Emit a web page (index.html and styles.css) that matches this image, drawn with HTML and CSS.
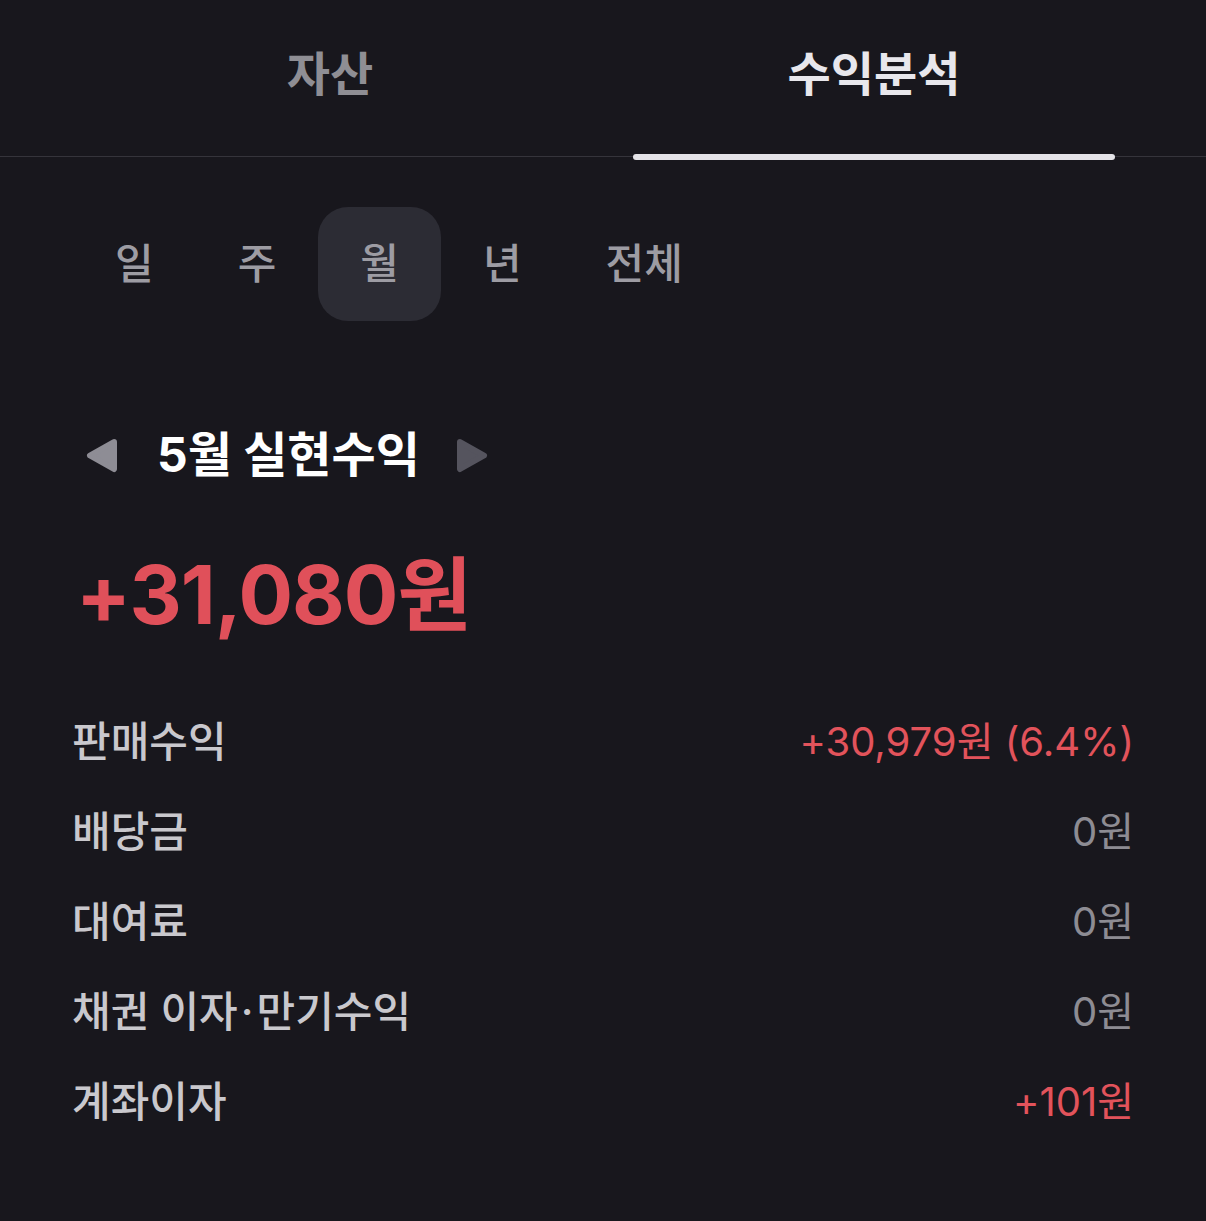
FILE: index.html
```html
<!DOCTYPE html>
<html lang="ko">
<head>
  <meta charset="UTF-8" />
  <meta name="viewport" content="width=device-width, initial-scale=1.0"/>
  <title>수익분석</title>
  <link rel="stylesheet" href="styles.css">
</head>
<body>
  <div class="screen">
    <nav class="tabs">
      <div class="tab">자산</div>
      <div class="tab active">수익분석</div>
    </nav>

    <div class="periods">
      <div class="period">일</div>
      <div class="period">주</div>
      <div class="period selected">월</div>
      <div class="period">년</div>
      <div class="period">전체</div>
    </div>

    <div class="month-nav">
      <svg class="arrow prev" width="32" height="35" viewBox="0 0 32 35">
        <path d="M28 4 L4 17.5 L28 31 Z" />
      </svg>
      <h2>5월 실현수익</h2>
      <svg class="arrow next" width="32" height="35" viewBox="0 0 32 35">
        <path d="M4 4 L28 17.5 L4 31 Z" />
      </svg>
    </div>

    <div class="total">+31,080원</div>

    <ul class="breakdown">
      <li><span class="label">판매수익</span><span class="value plus">+30,979원 (6.4%)</span></li>
      <li><span class="label">배당금</span><span class="value">0원</span></li>
      <li><span class="label">대여료</span><span class="value">0원</span></li>
      <li><span class="label">채권 이자<span class="dot">·</span>만기수익</span><span class="value">0원</span></li>
      <li><span class="label">계좌이자</span><span class="value plus">+101원</span></li>
    </ul>
  </div>
</body>
</html>
```

FILE: styles.css
```css
body {
  margin: 0;
  background: #18171d;
  font-family: Inter, "Noto Sans CJK KR", sans-serif;
  color: #e8e7ec;
}
.screen {
  min-height: 100vh;
}
.tabs {
  display: flex;
  padding: 0 60px 0 58px;
  height: 156px;
  border-bottom: 1px solid #35343b;
}
.tab {
  flex: 1;
  position: relative;
  text-align: center;
  padding-top: 44px;
  line-height: 60px;
  font-size: 47px;
  font-weight: 700;
  color: #8f8e94;
}
.tab.active {
  color: #e8e7ec;
}
.tab.active::after {
  content: "";
  position: absolute;
  left: 31px;
  right: 31px;
  bottom: -4px;
  height: 6px;
  border-radius: 3px;
  background: #e4e3e8;
}
.periods {
  display: flex;
  margin: 50px 0 0 73px;
}
.period {
  padding: 0 42px;
  height: 114px;
  line-height: 114px;
  font-size: 42px;
  font-weight: 500;
  color: #9d9ca3;
  border-radius: 30px;
}
.period.selected {
  background: #2c2c34;
}
.month-nav {
  display: flex;
  align-items: center;
  margin: 104px 0 0 86px;
  height: 60px;
}
.month-nav h2 {
  margin: 0 36px 0 39px;
  font-size: 48px;
  font-weight: 700;
  color: #ffffff;
  line-height: 60px;
}
.arrow path {
  stroke-linejoin: round;
  stroke-width: 6px;
}
.arrow.prev path {
  fill: #8e8d95;
  stroke: #8e8d95;
}
.arrow.next path {
  fill: #55545e;
  stroke: #55545e;
}
.total {
  margin: 60px 0 0 76px;
  height: 100px;
  line-height: 100px;
  font-size: 81px;
  font-weight: 700;
  letter-spacing: -1px;
  color: #e0505a;
}
.breakdown {
  list-style: none;
  margin: 52px 72px 0 72px;
  padding: 0;
}
.breakdown li {
  display: flex;
  justify-content: space-between;
  height: 90px;
  line-height: 90px;
}
.label {
  font-size: 42px;
  font-weight: 500;
  color: #c9c8cd;
}
.label .dot {
  margin: 0 3px;
}
.value {
  font-size: 40px;
  color: #8d8c93;
}
.value.plus {
  color: #e2535b;
}
```
